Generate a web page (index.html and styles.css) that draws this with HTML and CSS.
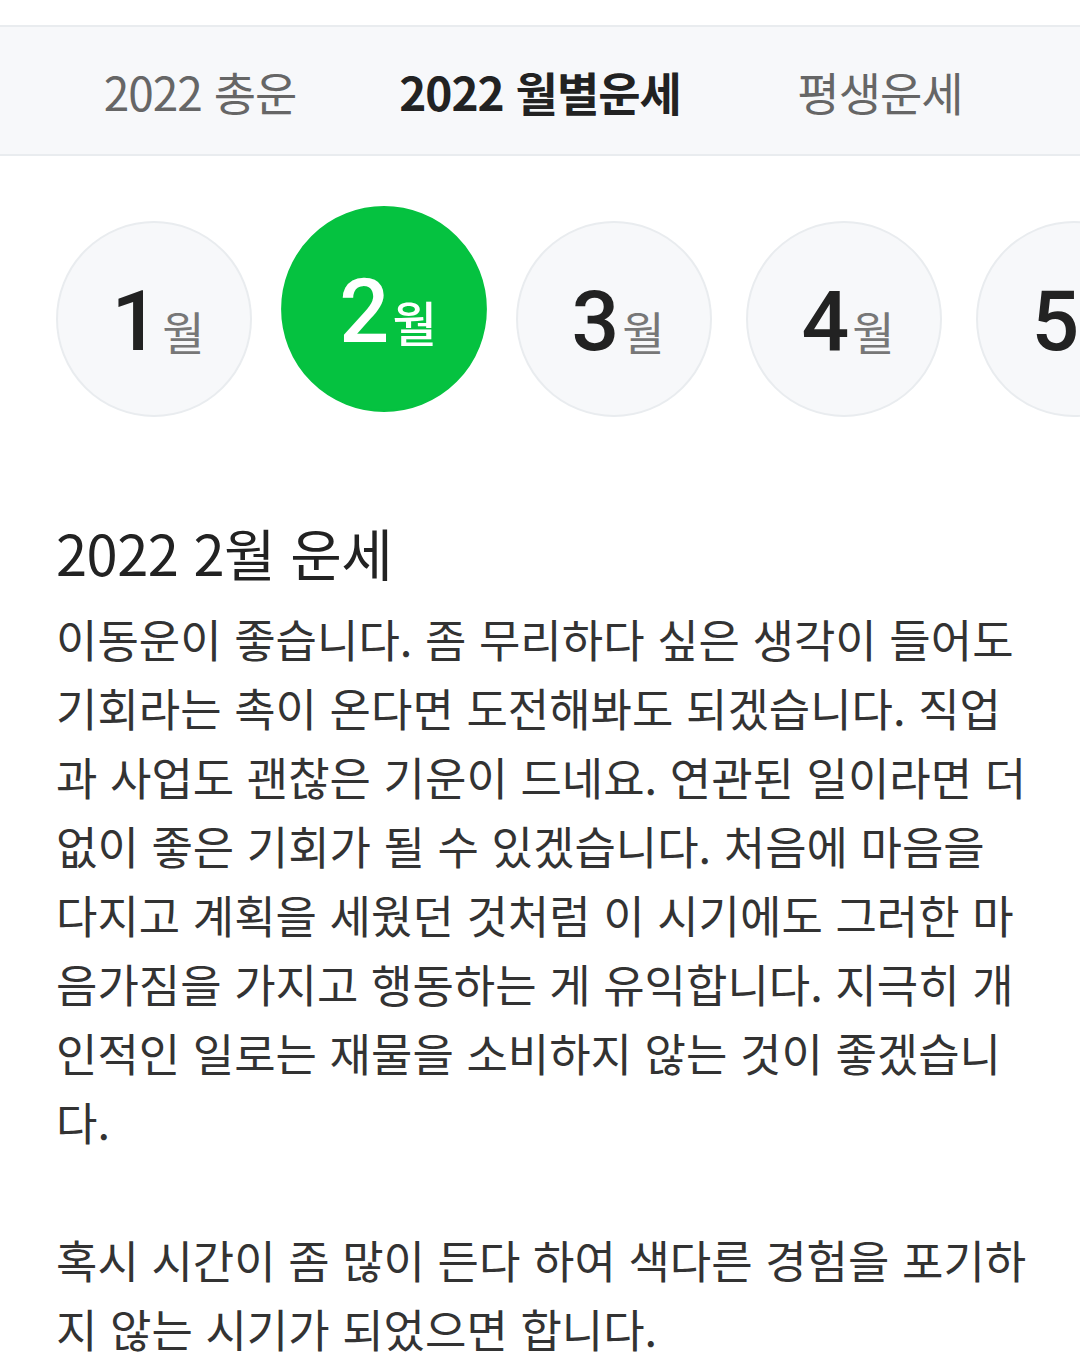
FILE: index.html
```html
<!DOCTYPE html>
<html lang="ko">
<head>
<meta charset="utf-8">
<title>2022 월별운세</title>
<link rel="stylesheet" href="styles.css">
</head>
<body>
  <div class="top-gap"></div>
  <nav class="tabs">
    <a class="tab">2022 총운</a>
    <a class="tab tab-active">2022 월별운세</a>
    <a class="tab">평생운세</a>
  </nav>

  <div class="months">
    <div class="month"><span class="num">1</span><span class="unit">월</span></div>
    <div class="month month-active"><span class="num">2</span><span class="unit">월</span></div>
    <div class="month"><span class="num">3</span><span class="unit">월</span></div>
    <div class="month"><span class="num">4</span><span class="unit">월</span></div>
    <div class="month"><span class="num">5</span><span class="unit">월</span></div>
    <div class="month"><span class="num">6</span><span class="unit">월</span></div>
  </div>

  <section class="fortune">
    <h2 class="fortune-title">2022 2월 운세</h2>
    <p class="fortune-text">이동운이 좋습니다. 좀 무리하다 싶은 생각이 들어도 기회라는 촉이 온다면 도전해봐도 되겠습니다. 직업과 사업도 괜찮은 기운이 드네요. 연관된 일이라면 더없이 좋은 기회가 될 수 있겠습니다. 처음에 마음을 다지고 계획을 세웠던 것처럼 이 시기에도 그러한 마음가짐을 가지고 행동하는 게 유익합니다. 지극히 개인적인 일로는 재물을 소비하지 않는 것이 좋겠습니다.<br><br>혹시 시간이 좀 많이 든다 하여 색다른 경험을 포기하지 않는 시기가 되었으면 합니다.</p>
  </section>
</body>
</html>
```

FILE: styles.css
```css
* {
  box-sizing: border-box;
}

body {
  margin: 0;
  background: #ffffff;
  font-family: "Noto Sans CJK KR", "Noto Sans", sans-serif;
  color: #333333;
  overflow: hidden;
}

.top-gap {
  height: 25px;
}

/* tab bar */
.tabs {
  display: flex;
  height: 131px;
  padding: 0 30px;
  background: #f7f8fa;
  border-top: 2px solid #e9ecef;
  border-bottom: 2px solid #e9ecef;
}

.tab {
  flex: 1;
  display: flex;
  align-items: center;
  justify-content: center;
  font-size: 46px;
  letter-spacing: -1px;
  color: #666666;
}

.tab-active {
  color: #222222;
  font-weight: 700;
}

/* month selector */
.months {
  display: flex;
  gap: 34px;
  padding: 65px 0 20px 56px;
  overflow: hidden;
}

.month {
  flex: 0 0 196px;
  height: 196px;
  border-radius: 50%;
  background: #f7f8fa;
  border: 2px solid #e9ecef;
  display: flex;
  align-items: baseline;
  justify-content: center;
  padding-top: 57px;
  padding-left: 8px;
}

.num {
  font-family: Roboto, "Liberation Sans", sans-serif;
  font-weight: 500;
  font-size: 84px;
  line-height: 1;
  color: #222222;
}

.unit {
  font-size: 46px;
  line-height: 1;
  margin-left: 3px;
  color: #777777;
}

.month-active {
  background: #05c240;
  border-color: #05c240;
  transform: translateY(-10px) scale(1.05);
}

.month-active .num,
.month-active .unit {
  color: #ffffff;
}

.month-active .unit {
  font-weight: 500;
}

/* fortune text */
.fortune {
  padding: 80px 50px 0 56px;
}

.fortune-title {
  margin: 0 0 17px;
  font-size: 56px;
  font-weight: 400;
  line-height: 70px;
  color: #222222;
  letter-spacing: -0.5px;
}

.fortune-text {
  margin: 0;
  font-size: 45px;
  line-height: 69px;
  color: #333333;
}
```
